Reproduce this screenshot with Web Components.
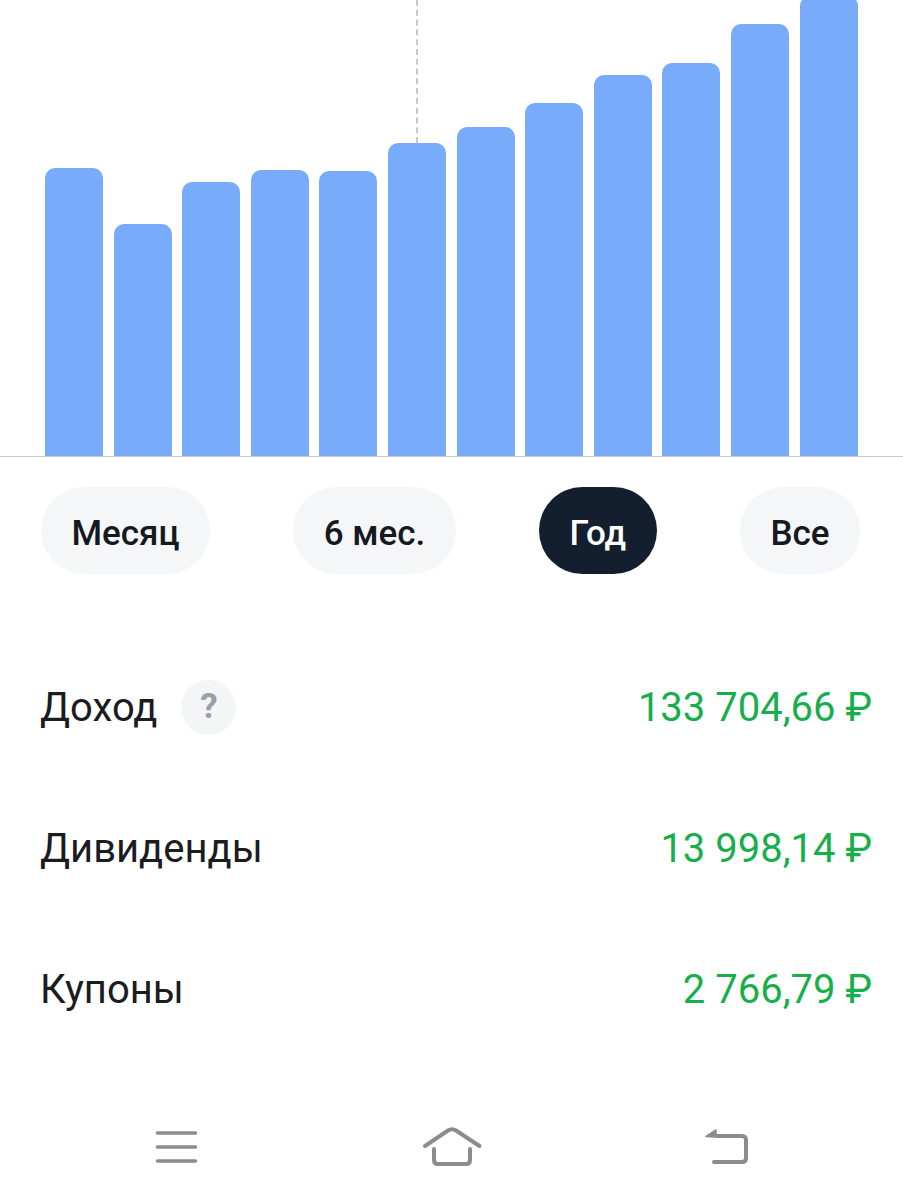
<!DOCTYPE html>
<html lang="ru"><head><meta charset="utf-8"><title>Доход</title>
<style>html,body{margin:0;background:#fff}body{width:903px;height:1200px;overflow:hidden;font-family:Roboto,"Liberation Sans",sans-serif;display:flex;flex-direction:column}</style></head>
<body>
<bar-chart values="288,232,274,286,285,313,329,353,381,393,432,460"></bar-chart>
<period-chips><period-chip>Месяц</period-chip><period-chip>6 мес.</period-chip><period-chip active>Год</period-chip><period-chip>Все</period-chip></period-chips>
<stat-list>
<stat-row value="133 704,66 ₽" help>Доход</stat-row>
<stat-row value="13 998,14 ₽">Дивиденды</stat-row>
<stat-row value="2 766,79 ₽">Купоны</stat-row>
</stat-list>
<nav-bar></nav-bar>
<script>
const def=(n,html,cls)=>customElements.define(n,class extends HTMLElement{constructor(){super();this.attachShadow({mode:'open'}).innerHTML=html;}connectedCallback(){cls&&cls.call(this)}});
def('bar-chart',`<style>:host{display:flex;flex:none;height:457px;box-sizing:border-box;padding-left:45px;gap:10.6px;align-items:flex-end;border-bottom:1.5px solid #c9cbce;position:relative;overflow:hidden}
.b{flex:none;width:58px;background:#78abfa;border-radius:10px 10px 0 0}
.d{position:absolute;left:416px;top:0;height:143px;border-left:2px dashed #c6c8ca}</style><div class="d"></div>`,function(){
 this.getAttribute('values').split(',').forEach(v=>{const b=document.createElement('div');b.className='b';b.style.height=v+'px';this.shadowRoot.append(b)});
});
def('period-chips',`<style>:host{display:flex;flex:none;justify-content:space-between;padding:30px 43px 0 41px}</style><slot></slot>`);
def('period-chip',`<style>:host{display:flex;align-items:center;justify-content:center;box-sizing:border-box;height:87px;padding:5px 30.5px 0;border-radius:44px;background:#f5f6f7;color:#14191f;font-size:35px;font-weight:500}
:host([active]){background:#131f2e;color:#fff}</style><slot></slot>`);
def('stat-list',`<style>:host{display:block;flex:none;padding-top:63px}</style><slot></slot>`);
def('stat-row',`<style>:host{display:flex;align-items:center;height:141px;padding:0 31px 0 40px;font-size:40px;color:#1a1c1f}
.q{display:none;box-sizing:border-box;width:55px;height:55px;padding-bottom:3px;border-radius:50%;background:#f4f5f6;color:#9a9fab;font-size:35px;font-weight:700;align-items:center;justify-content:center;margin-left:24px}
:host([help]) .q{display:flex}
.v{margin-left:auto;color:#17ae4b}</style><slot></slot><span class="q">?</span><span class="v"></span>`,function(){this.shadowRoot.querySelector('.v').textContent=this.getAttribute('value')});
def('nav-bar',`<style>:host{display:flex;flex:1;align-items:flex-start;padding:65px 0 0 146px}
svg{flex:none;width:60px;height:50px;fill:none;stroke:#8c8c8c;stroke-width:4;stroke-linecap:round;stroke-linejoin:round}</style>
<svg style="stroke-width:3.5" viewBox="0 0 60 50"><path d="M11.500 8H49.500M11.500 22H49.500M11.500 36H49.500"/></svg>
<svg style="margin-left:216px" viewBox="0 0 60 50"><path d="M3 21L26 5.500Q30 3 34 5.500L57.500 21"/><path d="M12 24V35Q12 39 16 39H44Q48 39 48 35V24"/></svg>
<svg style="margin-left:218px" viewBox="0 0 60 50"><path d="M17 11H42Q46 11 46 15V33Q46 37 42 37H14"/><path d="M6 11.500L16 5V12Z" fill="#8c8c8c" stroke-width="1.500"/></svg>`);
</script>
</body></html>
